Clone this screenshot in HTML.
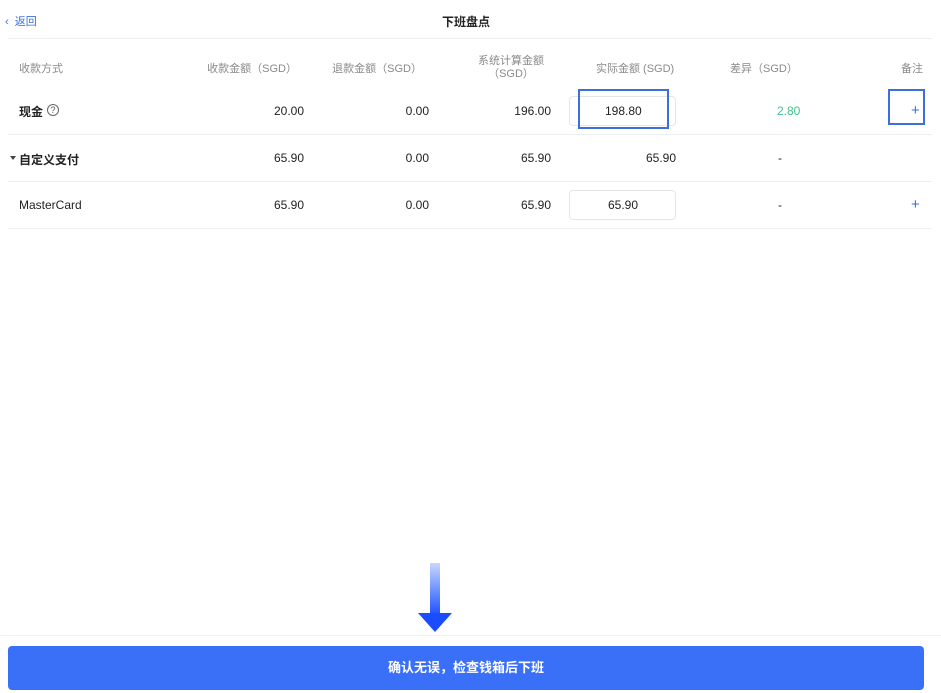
<!DOCTYPE html>
<html><head><meta charset="utf-8"><style>
*{margin:0;padding:0;box-sizing:border-box}
body{width:941px;height:693px;background:#fff;position:relative;overflow:hidden;font-family:"Liberation Sans","Noto Sans CJK SC",sans-serif;color:#222}
.a{position:absolute;white-space:nowrap}
.r{text-align:right}
.c{text-align:center}
.h{font-size:11px;color:#8a8a8a}
.t{font-size:12px;color:#222}
.line{position:absolute;left:8px;width:924px;height:1px;background:#eeeeee}
.box{position:absolute;border:1px solid #e6e6e6;border-radius:4px;background:#fff}
</style></head><body>
<div class="a" style="left:5px;top:13px;font-size:11px;color:#3a6fe0">‹&nbsp; 返回</div>
<div class="a" style="left:442px;top:13px;font-size:12px;font-weight:bold">下班盘点</div>
<div class="line" style="top:38px"></div>

<div class="a h" style="left:19px;top:60px">收款方式</div>
<div class="a h r" style="right:644px;top:60px">收款金额（SGD）</div>
<div class="a h r" style="right:519px;top:60px">退款金额（SGD）</div>
<div class="a h c" style="left:476px;width:70px;top:55px;line-height:13px">系统计算金额<br>（SGD）</div>
<div class="a h" style="left:596px;top:60px">实际金额 (SGD)</div>
<div class="a h" style="left:730px;top:60px">差异（SGD）</div>
<div class="a h r" style="right:18px;top:60px">备注</div>

<div class="a t" style="left:19px;top:103px;font-weight:bold">现金</div>
<div class="a" style="left:47px;top:104px;width:12px;height:12px;border:1px solid #666;border-radius:50%;font-size:9px;line-height:10px;text-align:center;color:#555">?</div>
<div class="a t r" style="right:637px;top:104px">20.00</div>
<div class="a t r" style="right:512px;top:104px">0.00</div>
<div class="a t r" style="right:390px;top:104px">196.00</div>
<div class="box" style="left:569px;top:96px;width:107px;height:30px"></div>
<div class="a" style="left:578px;top:89px;width:91px;height:40px;border:2px solid #3b6fe0"></div>
<div class="a t" style="left:605px;top:104px">198.80</div>
<div class="a" style="left:777px;top:104px;font-size:12px;color:#3cc48a">2.80</div>
<div class="a" style="left:888px;top:89px;width:37px;height:36px;border:2px solid #3b6fe0"></div>
<div class="a" style="left:911px;top:102px;font-size:15px;color:#3a6fe0">+</div>
<div class="line" style="top:134px"></div>

<div class="a" style="left:10px;top:156px;width:0;height:0;border-left:3px solid transparent;border-right:3px solid transparent;border-top:4px solid #444"></div>
<div class="a t" style="left:19px;top:151px;font-weight:bold">自定义支付</div>
<div class="a t r" style="right:637px;top:151px">65.90</div>
<div class="a t r" style="right:512px;top:151px">0.00</div>
<div class="a t r" style="right:390px;top:151px">65.90</div>
<div class="a t r" style="right:265px;top:151px">65.90</div>
<div class="a t" style="left:778px;top:151px">-</div>
<div class="line" style="top:181px"></div>

<div class="a t" style="left:19px;top:198px">MasterCard</div>
<div class="a t r" style="right:637px;top:198px">65.90</div>
<div class="a t r" style="right:512px;top:198px">0.00</div>
<div class="a t r" style="right:390px;top:198px">65.90</div>
<div class="box" style="left:569px;top:190px;width:107px;height:30px"></div>
<div class="a t" style="left:608px;top:198px">65.90</div>
<div class="a t" style="left:778px;top:198px">-</div>
<div class="a" style="left:911px;top:196px;font-size:15px;color:#3a6fe0">+</div>
<div class="line" style="top:228px"></div>

<div class="a" style="left:430px;top:563px;width:10px;height:51px;background:linear-gradient(#c8d6ff,#1f54ff)"></div>
<div class="a" style="left:418px;top:613px;width:0;height:0;border-left:17px solid transparent;border-right:17px solid transparent;border-top:19px solid #1a4dff"></div>

<div class="a" style="left:0;top:635px;width:941px;height:1px;background:#f0f0f0"></div>
<div class="a" style="left:8px;top:646px;width:916px;height:44px;background:#3a6ff7;border-radius:4px;color:#fff;font-size:13px;font-weight:bold;text-align:center;line-height:44px">确认无误，检查钱箱后下班</div>
</body></html>
